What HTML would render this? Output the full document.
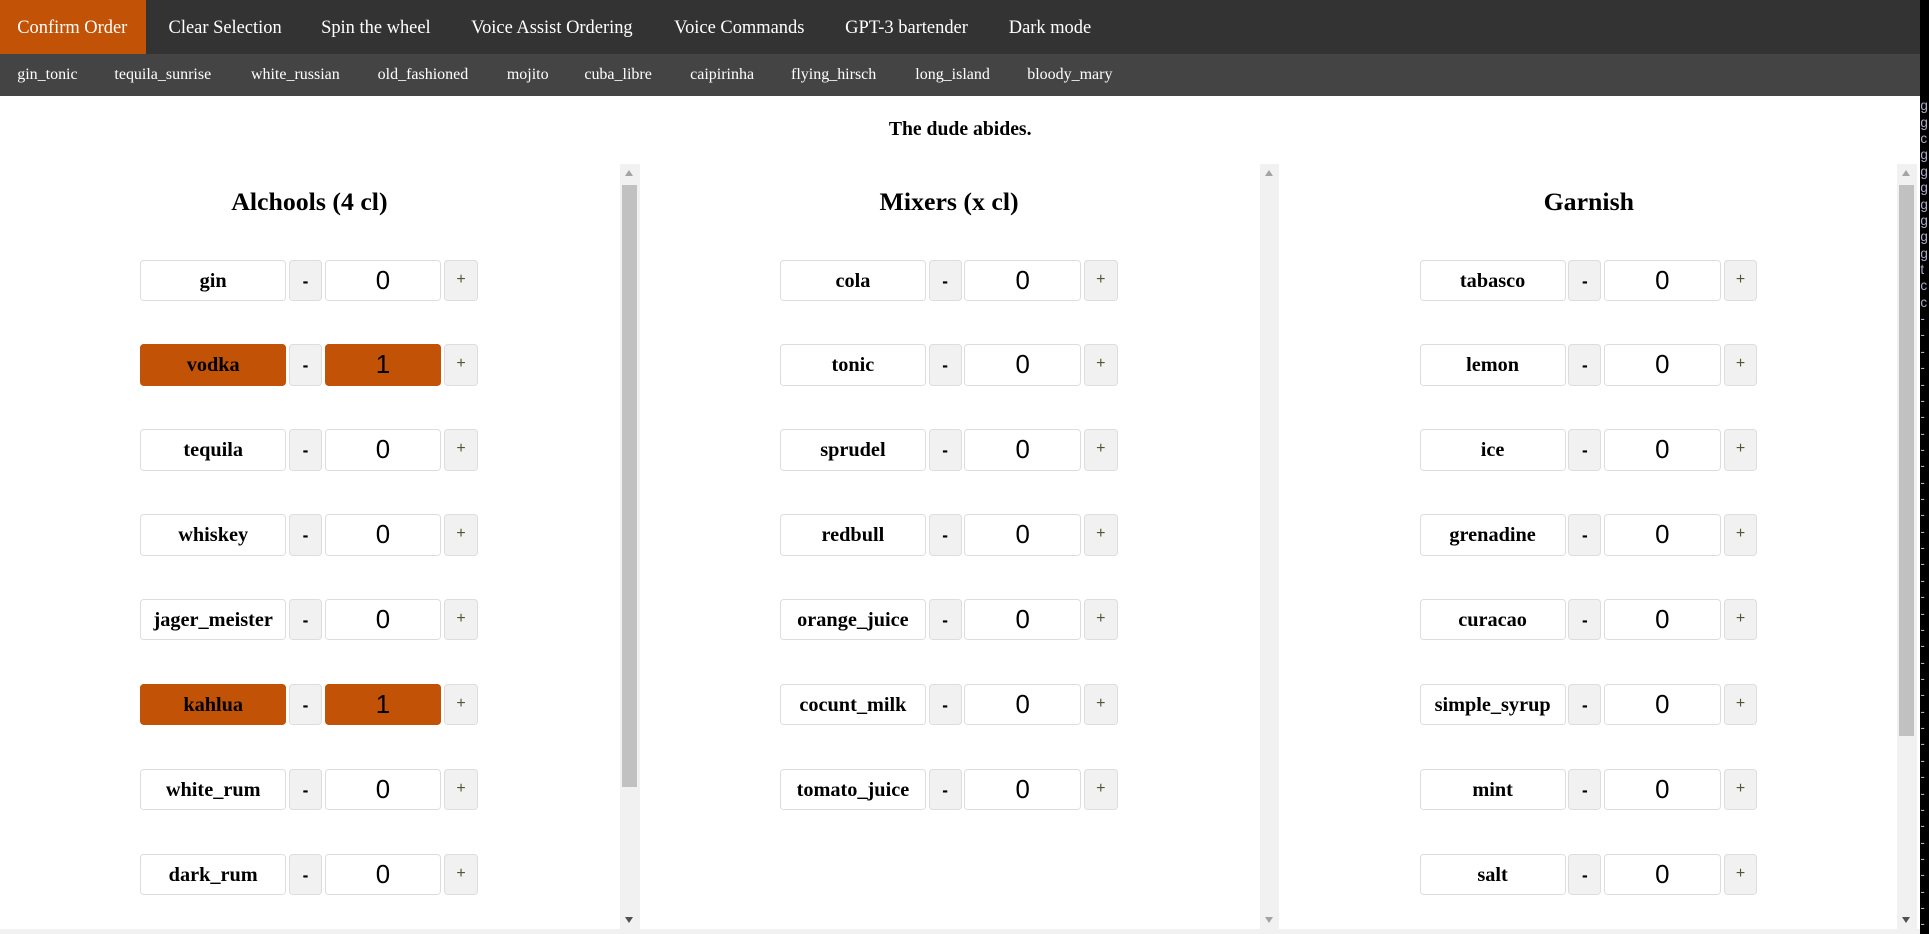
<!DOCTYPE html>
<html><head><meta charset="utf-8">
<style>
html,body{margin:0;padding:0;}
body{width:1929px;height:934px;overflow:hidden;background:#fff;}
#w{zoom:1.2302;width:1568px;height:759px;position:relative;font-family:"Liberation Serif",serif;overflow:hidden;}
.nav{position:absolute;left:0;top:0;width:1561px;height:44px;background:#333;}
.nav a{position:absolute;top:0;height:44px;line-height:44px;color:#fff;font-size:15px;white-space:nowrap;}
.nav a.on{background:#c25206;padding:0 15px 0 14px;left:0;}
.sub{position:absolute;left:0;top:44px;width:1561px;height:34px;background:#444;}
.sub a{position:absolute;top:0;line-height:34px;color:#fff;font-size:13px;white-space:nowrap;}
.strip{position:absolute;left:1561px;top:0;width:7px;height:759px;background:#000;overflow:hidden;color:#aac;font:11px "Liberation Sans",sans-serif;line-height:13.3px;padding-top:80px;}
.dude{position:absolute;top:96px;left:0;width:1561px;text-align:center;font-weight:bold;font-size:16px;}
.col{position:absolute;top:133px;width:520px;height:626px;}
.sb{position:absolute;right:0;top:0;width:16px;height:622px;background:#f1f1f1;}
.th{position:absolute;left:2px;width:12px;top:17px;background:#c1c1c1;}
.up,.dn{position:absolute;left:4px;width:0;height:0;border-left:4px solid transparent;border-right:4px solid transparent;}
.up{top:5px;border-bottom:5px solid #a3a3a3;}
.dn{bottom:5px;border-top:5px solid #505050;}
h2{position:absolute;top:19px;left:0;width:503px;text-align:center;font-size:21px;margin:0;font-weight:bold;}
.row{position:absolute;left:114px;height:34px;}
.row div{position:absolute;top:0;height:32px;border:1px solid #ddd;border-radius:3px;box-sizing:content-box;text-align:center;line-height:34px;}
.n{left:0;width:117px;background:#fff;font-weight:bold;font-size:16.5px;white-space:nowrap;}
.m{left:121px;width:25px;background:#f1f1f1;font:bold 14px "Liberation Sans",sans-serif;}
.v{left:150px;width:93px;background:#fff;font:21px "Liberation Sans",sans-serif;line-height:33px!important;}
.p{left:247px;width:26px;background:#f1f1f1;font:13px "Liberation Sans",sans-serif;line-height:31px!important;color:#553;}
.sel .n,.sel .v{background:#c25206;border-color:#c25206;}
.bot{position:absolute;left:0;top:755px;width:1561px;height:4px;background:#f1f1f1;}
</style></head><body><div id="w">
<div class="nav">
<a class="on">Confirm Order</a>
<a style="left:137px">Clear Selection</a>
<a style="left:261px">Spin the wheel</a>
<a style="left:383px">Voice Assist Ordering</a>
<a style="left:548px">Voice Commands</a>
<a style="left:687px">GPT-3 bartender</a>
<a style="left:820px">Dark mode</a>
</div>
<div class="sub">
<a style="left:14px">gin_tonic</a>
<a style="left:93px">tequila_sunrise</a>
<a style="left:204px">white_russian</a>
<a style="left:307px">old_fashioned</a>
<a style="left:412px">mojito</a>
<a style="left:475px">cuba_libre</a>
<a style="left:561px">caipirinha</a>
<a style="left:643px">flying_hirsch</a>
<a style="left:744px">long_island</a>
<a style="left:835px">bloody_mary</a>
</div>
<div class="strip">g<br>g<br>c<br>g<br>g<br>g<br>g<br>g<br>g<br>g<br>t<br>c<br>c<br>-<br>-<br>-<br>-<br>-<br>-<br>-<br>-<br>-<br>-<br>-<br>-<br>-<br>-<br>-<br>-<br>-<br>-<br>-<br>-<br>-<br>-<br>-<br>-<br>-<br>-<br>-<br>-<br>-<br>-<br>-<br>-<br>-<br>-<br>-<br>-<br>-<br>-</div>
<div class="dude">The dude abides.</div>

<div class="col" style="left:0">
<h2>Alchools (4 cl)</h2>
<div class="row" style="top:78px"><div class="n">gin</div><div class="m">-</div><div class="v">0</div><div class="p">+</div></div>
<div class="row sel" style="top:147px"><div class="n">vodka</div><div class="m">-</div><div class="v">1</div><div class="p">+</div></div>
<div class="row" style="top:216px"><div class="n">tequila</div><div class="m">-</div><div class="v">0</div><div class="p">+</div></div>
<div class="row" style="top:285px"><div class="n">whiskey</div><div class="m">-</div><div class="v">0</div><div class="p">+</div></div>
<div class="row" style="top:354px"><div class="n">jager_meister</div><div class="m">-</div><div class="v">0</div><div class="p">+</div></div>
<div class="row sel" style="top:423px"><div class="n">kahlua</div><div class="m">-</div><div class="v">1</div><div class="p">+</div></div>
<div class="row" style="top:492px"><div class="n">white_rum</div><div class="m">-</div><div class="v">0</div><div class="p">+</div></div>
<div class="row" style="top:561px"><div class="n">dark_rum</div><div class="m">-</div><div class="v">0</div><div class="p">+</div></div>
<div class="sb"><div class="up"></div><div class="th" style="height:490px"></div><div class="dn"></div></div>
</div>

<div class="col" style="left:520px">
<h2>Mixers (x cl)</h2>
<div class="row" style="top:78px"><div class="n">cola</div><div class="m">-</div><div class="v">0</div><div class="p">+</div></div>
<div class="row" style="top:147px"><div class="n">tonic</div><div class="m">-</div><div class="v">0</div><div class="p">+</div></div>
<div class="row" style="top:216px"><div class="n">sprudel</div><div class="m">-</div><div class="v">0</div><div class="p">+</div></div>
<div class="row" style="top:285px"><div class="n">redbull</div><div class="m">-</div><div class="v">0</div><div class="p">+</div></div>
<div class="row" style="top:354px"><div class="n">orange_juice</div><div class="m">-</div><div class="v">0</div><div class="p">+</div></div>
<div class="row" style="top:423px"><div class="n">cocunt_milk</div><div class="m">-</div><div class="v">0</div><div class="p">+</div></div>
<div class="row" style="top:492px"><div class="n">tomato_juice</div><div class="m">-</div><div class="v">0</div><div class="p">+</div></div>
<div class="sb"><div class="up"></div><div class="dn" style="border-top-color:#a3a3a3"></div></div>
</div>

<div class="col" style="left:1040px">
<h2>Garnish</h2>
<div class="row" style="top:78px"><div class="n">tabasco</div><div class="m">-</div><div class="v">0</div><div class="p">+</div></div>
<div class="row" style="top:147px"><div class="n">lemon</div><div class="m">-</div><div class="v">0</div><div class="p">+</div></div>
<div class="row" style="top:216px"><div class="n">ice</div><div class="m">-</div><div class="v">0</div><div class="p">+</div></div>
<div class="row" style="top:285px"><div class="n">grenadine</div><div class="m">-</div><div class="v">0</div><div class="p">+</div></div>
<div class="row" style="top:354px"><div class="n">curacao</div><div class="m">-</div><div class="v">0</div><div class="p">+</div></div>
<div class="row" style="top:423px"><div class="n">simple_syrup</div><div class="m">-</div><div class="v">0</div><div class="p">+</div></div>
<div class="row" style="top:492px"><div class="n">mint</div><div class="m">-</div><div class="v">0</div><div class="p">+</div></div>
<div class="row" style="top:561px"><div class="n">salt</div><div class="m">-</div><div class="v">0</div><div class="p">+</div></div>
<div class="sb" style="right:2px"><div class="up"></div><div class="th" style="height:448px"></div><div class="dn"></div></div>
</div>
<div class="bot"></div>
</div></body></html>
